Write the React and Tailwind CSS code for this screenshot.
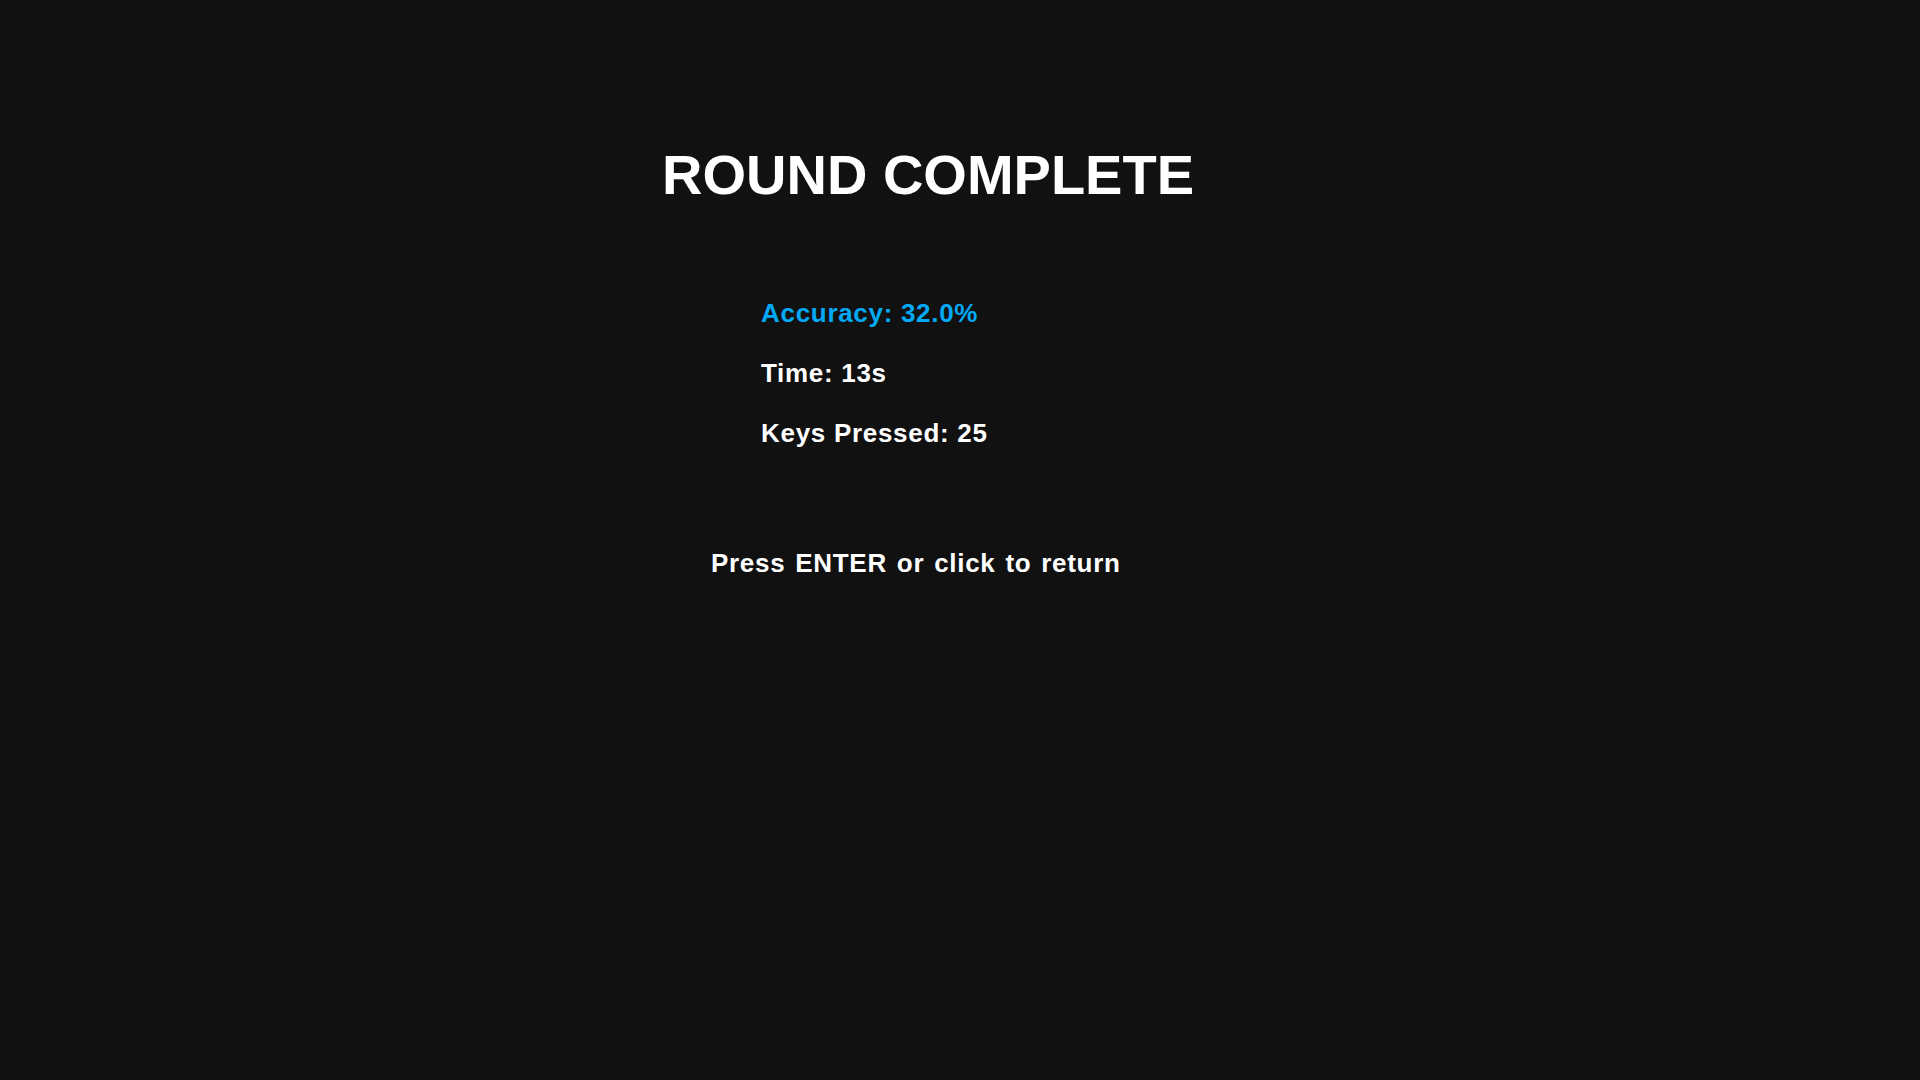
import React from 'react';

const stats = [
    { label: 'Accuracy: 32.0%', color: 'text-[#03a9f4]' },
    { label: 'Time: 13s', color: 'text-white' },
    { label: 'Keys Pressed: 25', color: 'text-white' },
];

export default function App() {
    return (
        <div className="min-h-screen w-full bg-[#111111] font-['Liberation_Sans',Arial,sans-serif] font-bold">
            <div className="flex flex-col pt-[147px]">
                <h1 className="ml-[662px] text-[56px] leading-none text-white">ROUND COMPLETE</h1>

                <div className="ml-[761px] mt-[80px] flex flex-col">
                    {stats.map((s) => (
                        <div key={s.label} className={`text-[26px] leading-[60px] tracking-[0.7px] ${s.color}`}>
                            {s.label}
                        </div>
                    ))}
                </div>

                <p className="ml-[711px] mt-[70px] text-[26px] leading-[60px] tracking-[0.7px] [word-spacing:2px] text-white">
                    Press ENTER or click to return
                </p>
            </div>
        </div>
    );
}
